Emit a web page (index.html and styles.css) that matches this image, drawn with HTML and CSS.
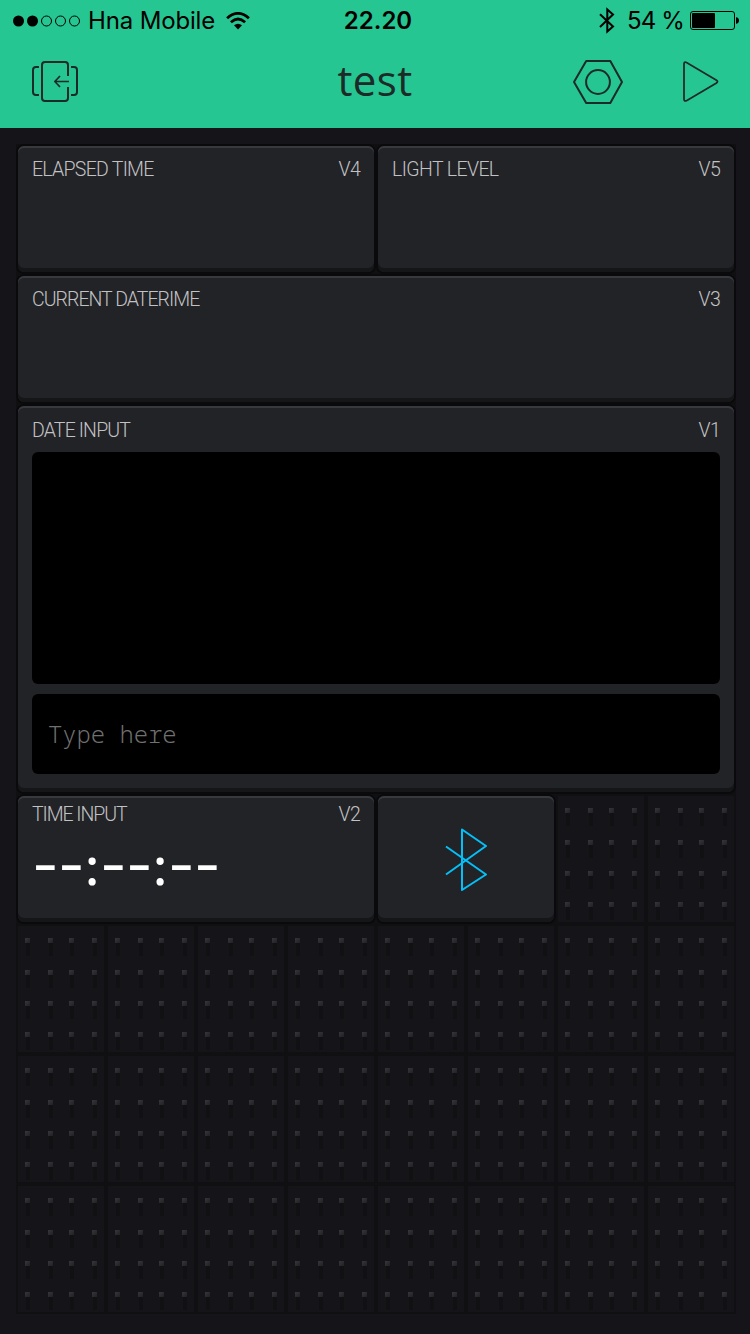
FILE: index.html
```html
<!DOCTYPE html>
<html lang="en">
<head>
<meta charset="utf-8">
<title>test</title>
<link rel="stylesheet" href="styles.css">
</head>
<body>
<header class="header">
  <div class="status">
    <div class="status-left">
      <svg class="signal" width="68" height="12" viewBox="0 0 68 12"><g fill="#000"><circle cx="5.5" cy="6" r="5.5"/><circle cx="19.5" cy="6" r="5.5"/></g><g fill="none" stroke="#000"><circle cx="33.5" cy="6" r="5"/><circle cx="47.5" cy="6" r="5"/><circle cx="61.5" cy="6" r="5"/></g></svg>
      <span class="carrier">Hna Mobile</span>
      <svg class="wifi" width="24" height="18" viewBox="0 0 24 18"><g fill="none" stroke="#000" stroke-width="2.8"><path d="M1.1 6.2Q12-3.4 22.900 6.2"/><path d="M4.900 10.2Q12 3.900 19.100 10.200"/></g><path d="M8 13.300Q12 10 16 13.300L12 17.500Z"/></svg>
    </div>
    <span class="clock">22.20</span>
    <div class="status-right">
      <svg class="bt-small" width="16" height="28" viewBox="0 0 16 28"><path d="M1 7.200L14 19.500L8.300 24.500V2.500L14 7.500L1 20" fill="none" stroke="#000" stroke-width="2"/></svg>
      <span class="percent">54 %</span>
      <svg class="battery" width="49" height="19" viewBox="0 0 49 19"><rect x=".5" y=".5" width="44" height="18" rx="2.500" fill="none" stroke="#000"/><rect x="2" y="2" width="23" height="15" rx="1"/><path d="M46 6.200Q49 6.500 49 9.500T46 12.800Z"/></svg>
    </div>
  </div>
  <nav class="nav">
    <svg class="exit" width="48" height="42" viewBox="0 0 48 42"><g fill="none" stroke="#1d2a27" stroke-width="2" stroke-linejoin="round"><path d="M36 15V4Q36 1 33 1H13Q10 1 10 4V37Q10 40 13 40H33Q36 40 36 37V26"/><path d="M7 6H4Q1 6 1 9V31Q1 34 4 34H7M39 6H42Q45 6 45 9V31Q45 34 42 34H39"/><path d="M37 20.500H23.500M28 15L22.800 20.500L28 26" stroke-width="1.700"/></g></svg>
    <h1 class="title">test</h1>
    <div class="actions">
      <svg width="50" height="46" viewBox="0 0 50 46"><g fill="none" stroke="#1d2a27" stroke-width="2"><path d="M1 23L13.200 2H37.300L49 23L37.300 44H13.200Z" stroke-linejoin="round"/><circle cx="25" cy="23" r="11.900"/></g></svg>
      <svg width="36" height="42" viewBox="0 0 36 42"><path d="M1 3Q1 .500 3.500 1.500L33.500 19.200Q35.500 20.500 33.500 22L3.500 39.700Q1 40.700 1 38Z" fill="none" stroke="#1d2a27" stroke-width="1.800"/></svg>
    </div>
  </nav>
</header>
<main class="board">
  <svg class="pegs" width="720" height="1170">
    <defs>
      <linearGradient id="shine" x1="0" y1="0" x2="1" y2="1"><stop offset="0" stop-color="#37373a"/><stop offset="1" stop-color="#202125"/></linearGradient>
      <g id="peg"><rect x="1" y="5" width="4" height="13" fill="#111114"/><rect width="5" height="5" fill="url(#shine)"/></g>
      <g id="pegrow"><use href="#peg" x="9"/><use href="#peg" x="32"/><use href="#peg" x="53"/><use href="#peg" x="76"/></g>
      <pattern id="cell" width="90" height="130" patternUnits="userSpaceOnUse">
        <rect width="90" height="130" fill="#101013"/><rect x="2" y="2" width="86" height="126" rx="1" fill="#141419"/>
        <use href="#pegrow" y="14"/><use href="#pegrow" y="46"/><use href="#pegrow" y="77"/><use href="#pegrow" y="108"/>
      </pattern>
    </defs>
    <rect width="720" height="1170" fill="url(#cell)"/>
  </svg>
  <section class="card elapsed"><div class="label"><span class="n-elapsed">ELAPSED TIME</span><span class="pin">V4</span></div></section>
  <section class="card light"><div class="label"><span class="n-light">LIGHT LEVEL</span><span class="pin">V5</span></div></section>
  <section class="card current"><div class="label"><span class="n-current">CURRENT DATERIME</span><span class="pin">V3</span></div></section>
  <section class="card terminal">
    <div class="label"><span class="n-date">DATE INPUT</span><span class="pin">V1</span></div>
    <div class="screen"></div>
    <div class="prompt">Type here</div>
  </section>
  <section class="card time">
    <div class="label"><span class="n-time">TIME INPUT</span><span class="pin">V2</span></div>
    <div class="digits"><span class="dash">-</span><span class="dash">-</span><span class="colon">:</span><span class="dash">-</span><span class="dash">-</span><span class="colon">:</span><span class="dash">-</span><span class="dash">-</span></div>
  </section>
  <section class="card bluetooth">
    <svg width="42" height="64" viewBox="0 0 42 64"><path d="M1 18.500L41 46.500L17 62V1.500L41 18L1 46.500" fill="none" stroke="#04c0f8" stroke-width="2" stroke-linejoin="round"/></svg>
  </section>
</main>
</body>
</html>
```
FILE: styles.css
```css
* { box-sizing: border-box; }
body { margin: 0; width: 750px; height: 1334px; overflow: hidden; background: #141419; font-family: Roboto, "Liberation Sans", sans-serif; }
svg { display: block; flex: none; }
.header { height: 128px; background: #25c691; color: #000; }
.status { display: grid; grid-template-columns: 1fr auto 1fr; align-items: center; height: 40px; padding: 0 11px 0 13px; font: 400 24px/40px Inter, sans-serif; white-space: nowrap; }
.status-left, .status-right { display: flex; align-items: center; height: 40px; }
.status-right { justify-content: flex-end; }
.carrier { width: 127px; margin: 1px 11px 0 7px; letter-spacing: -.15px; }
.clock { font-weight: 600; letter-spacing: 0; padding: 1px 0 0 4px; }
.percent { margin: 1px 6px 0 12px; letter-spacing: -.85px; }
.nav { display: grid; grid-template-columns: 1fr auto 1fr; align-items: center; height: 84px; padding: 0 32px; }
.title { margin: -4px 0 0; font: 400 42px/84px "Open Sans", sans-serif; color: #1d2a27; letter-spacing: .4px; }
.actions { display: flex; justify-content: flex-end; align-items: center; gap: 60px; margin-right: -1px; }
.board { display: grid; grid-template: repeat(9, 130px) / repeat(8, 90px); width: 720px; margin: 16px 0 0 16px; }
.pegs { grid-area: 1 / 1 / -1 / -1; }
.card { position: relative; margin: 2px; padding: 0 14px; border-radius: 6px; background: #222327; box-shadow: inset 0 2px #38393d, inset 0 -4px #151618, 0 0 0 2px #0a0a0c; }
.elapsed { grid-area: 1 / 1 / 2 / 5; }
.light { grid-area: 1 / 5 / 2 / 9; }
.current { grid-area: 2 / 1 / 3 / 9; }
.terminal { grid-area: 3 / 1 / 6 / 9; }
.time { grid-area: 6 / 1 / 7 / 5; }
.bluetooth { grid-area: 6 / 5 / 7 / 7; display: flex; align-items: center; justify-content: center; padding-top: 1px; }
.label { display: flex; justify-content: space-between; height: 35px; padding-top: 12px; font-size: 19.5px; line-height: 24px; font-weight: 300; color: #c2c2c4; white-space: nowrap; }
.terminal .label { height: 36px; padding-top: 13px; }
.time .label { height: 30px; padding-top: 7px; }
.n-elapsed { letter-spacing: -.73px; }
.n-light { letter-spacing: -.6px; }
.n-current { letter-spacing: -.97px; }
.n-date { letter-spacing: -.85px; }
.n-time { letter-spacing: -1.05px; }
.pin { letter-spacing: -.7px; }
.screen { height: 232px; margin-top: 10px; border-radius: 6px; background: #000; }
.prompt { height: 80px; margin-top: 10px; padding-left: 16px; border-radius: 6px; background: #000; color: #707070; font: 300 23.8px/80px "Noto Sans Mono", "Noto Sans Mono CJK SC", "DejaVu Sans Mono", monospace; }
.digits { display: flex; margin-top: 9px; color: #fff; font: 600 50px/60px "Open Sans", sans-serif; }
.dash { width: 26px; text-align: center; font-family: Inter, sans-serif; font-size: 58px; font-weight: 400; }
.colon { width: 16px; padding-top: 1px; text-align: center; }
```
